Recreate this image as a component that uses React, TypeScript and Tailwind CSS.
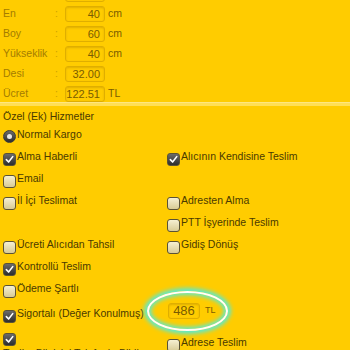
import React from "react";

const dims = [
  { label: "", value: "", unit: "", colon: false },
  { label: "En", value: "40", unit: "cm", colon: true },
  { label: "Boy", value: "60", unit: "cm", colon: true },
  { label: "Yükseklik", value: "40", unit: "cm", colon: true },
  { label: "Desi", value: "32.00", unit: "", colon: true },
  { label: "Ücret", value: "122.51", unit: "TL", colon: true },
];

function Box({ checked }: { checked?: boolean }) {
  return (
    <span
      className={
        "mt-[3px] w-[13px] h-[13px] shrink-0 rounded-[3px] border border-[#5a5236] flex items-center justify-center " +
        (checked
          ? "bg-gradient-to-b from-[#6b6b6b] to-[#2e2e2e]"
          : "bg-gradient-to-b from-[#f6f0d2] to-[#d8cb95]")
      }
    >
      {checked && (
        <svg width="9" height="9" viewBox="0 0 10 10">
          <path d="M1.5 5.2 L4 7.8 L8.6 1.8" fill="none" stroke="#fff" strokeWidth="1.8" strokeLinecap="round" strokeLinejoin="round" />
        </svg>
      )}
    </span>
  );
}

function Radio() {
  return (
    <span className="mt-[2px] w-[13px] h-[13px] shrink-0 rounded-full border border-[#3a3a3a] bg-gradient-to-b from-[#6b6b6b] to-[#2e2e2e] flex items-center justify-center">
      <span className="w-[5px] h-[5px] rounded-full bg-[#e8e8e8]" />
    </span>
  );
}

function Opt({ label, checked, radio }: { label: string; checked?: boolean; radio?: boolean }) {
  return (
    <div className="flex items-start gap-[1px]">
      {radio ? <Radio /> : <Box checked={checked} />}
      <span className="text-[10.5px] leading-[12px] text-[#4a3a00] whitespace-nowrap">{label}</span>
    </div>
  );
}

export default function App() {
  return (
    <div className="w-[350px] h-[350px] overflow-hidden bg-[#ffcc00] font-['Liberation_Sans',Arial,sans-serif]">
      {/* Ölçüler */}
      <div className="-mt-[14px] flex flex-col gap-[4px]">
        {dims.map((d, i) => (
          <div key={i} className="flex items-center h-[16px] text-[10.5px]">
            <span className="w-[55px] pl-[3px] text-[#a47c00]">{d.label}</span>
            <span className="w-[10px] text-[#cc9f00]">{d.colon ? ":" : ""}</span>
            <span className="w-[40px] h-[16px] border border-[#dfae00] rounded-[3px] shadow-[inset_0_1px_2px_rgba(150,110,0,0.3)] text-right pr-[4px] leading-[14px] text-[11px] text-[#7a5c00]">
              {d.value}
            </span>
            <span className="ml-[3px] text-[#7a5c00]">{d.unit}</span>
          </div>
        ))}
      </div>

      <div className="h-[4px] bg-[#ffdf55] border-t border-[#ffe680]" />

      <div className="pl-[3px] pt-[4px] text-[10.5px] leading-[12px] text-[#4a3a00]">Özel (Ek) Hizmetler</div>

      {/* Hizmetler */}
      <div className="pl-[3px] pt-[6px] grid grid-cols-[164px_1fr] grid-rows-[repeat(8,22px)_26px_24px]">
        <Opt label="Normal Kargo" radio />
        <div />
        <Opt label="Alma Haberli" checked />
        <Opt label="Alıcının Kendisine Teslim" checked />
        <Opt label="Email" />
        <div />
        <Opt label="İl İçi Teslimat" />
        <Opt label="Adresten Alma" />
        <div />
        <Opt label="PTT İşyerinde Teslim" />
        <Opt label="Ücreti Alıcıdan Tahsil" />
        <Opt label="Gidiş Dönüş" />
        <Opt label="Kontrollü Teslim" checked />
        <div />
        <Opt label="Ödeme Şartlı" />
        <div />
        <div className="pt-[3px]">
          <Opt label="Sigortalı (Değer Konulmuş)" checked />
        </div>
        <div className="pt-[4px]">
          <div className="flex items-start">
            <div className="relative ml-[1px] -mt-[5px]">
              <div className="absolute left-[-21px] top-[-12px] w-[81px] h-[40px] rounded-[50%] border-2 border-white shadow-[0_0_4px_3px_#55ecd6,inset_0_0_4px_2px_#55ecd6]" />
              <span className="block w-[32px] h-[16px] border border-[#dfae00] rounded-[3px] shadow-[inset_0_1px_2px_rgba(150,110,0,0.3)] text-center text-[13px] leading-[14px] text-[#7a5c00]">
                486
              </span>
            </div>
            <span className="ml-[5px] -mt-[3px] text-[9px] leading-[10px] text-[#7a5c00]">TL</span>
          </div>
        </div>
        <div className="flex flex-col items-start">
          <Box checked />
          <span className="mt-[1px] text-[10.5px] leading-[12px] text-[#4a3a00] whitespace-nowrap">
            Teslim Bilgisini Telefonla Bildirme
          </span>
        </div>
        <div className="pt-[6px]">
          <Opt label="Adrese Teslim" />
        </div>
      </div>
    </div>
  );
}
